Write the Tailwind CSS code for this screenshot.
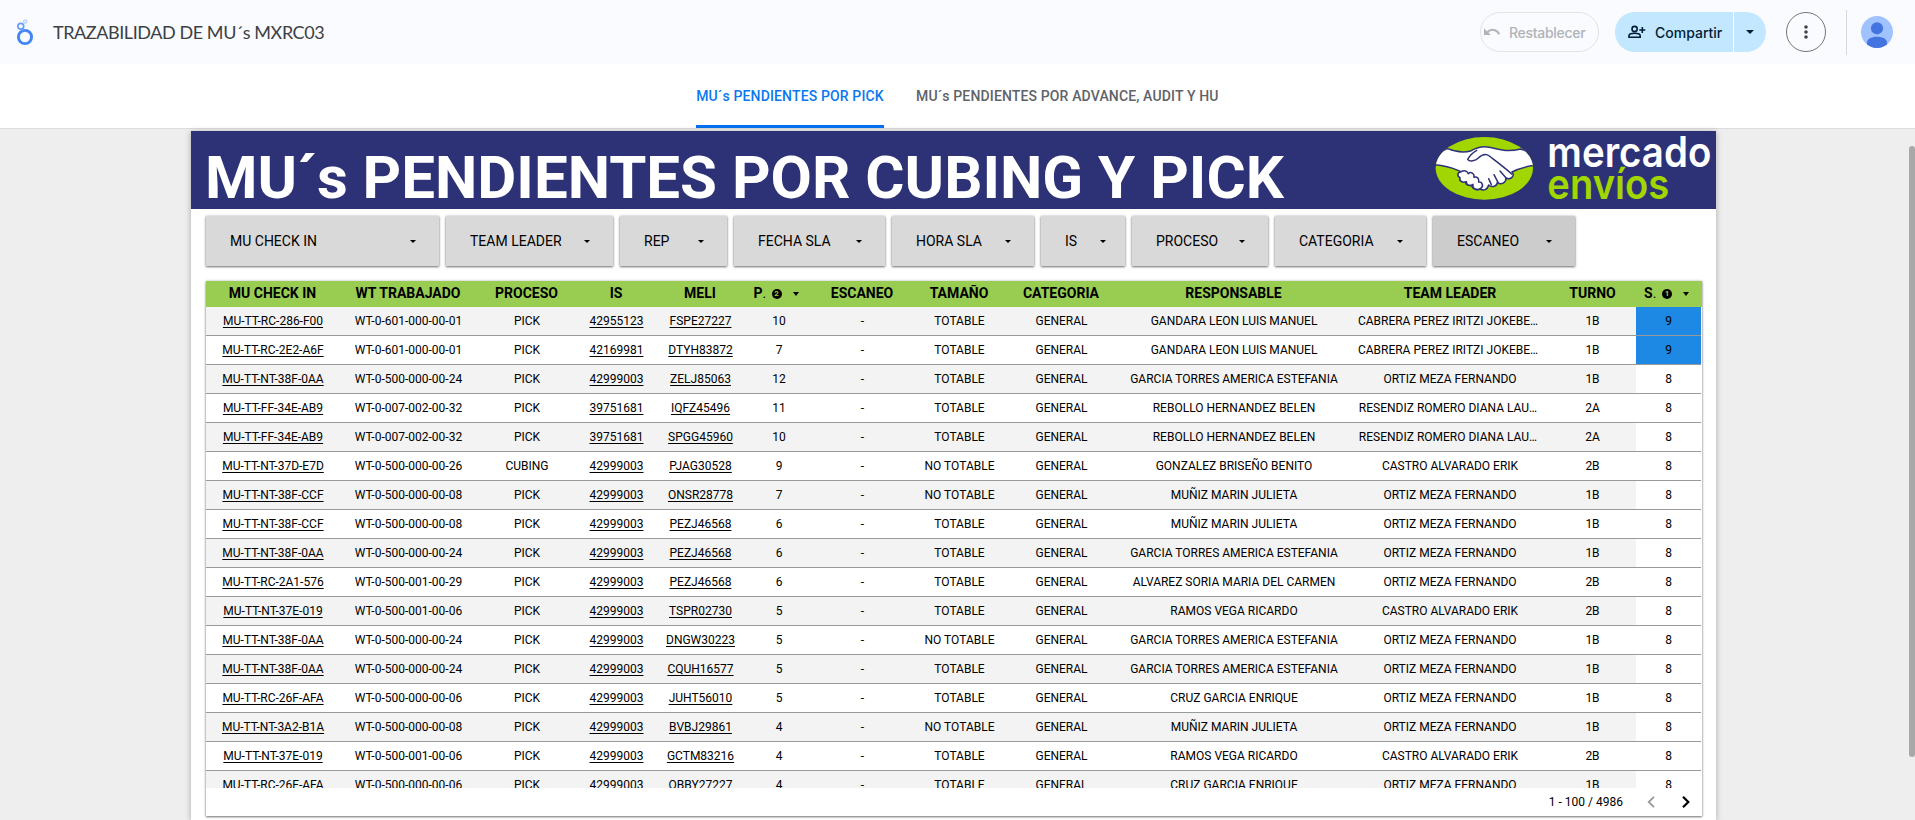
<!DOCTYPE html>
<html lang="es">
<head>
<meta charset="utf-8">
<title>TRAZABILIDAD DE MU´s MXRC03</title>
<script src="https://cdn.jsdelivr.net/npm/@tailwindcss/browser@4"></script>
</head>
<body class="h-[820px] w-[1915px] overflow-hidden bg-[#eeeeee] font-[Roboto,sans-serif] text-black flex flex-col">

<header class="h-16 shrink-0 bg-[#f9fbff] flex items-center font-[Lato,sans-serif]">
  <svg class="ml-4 w-[18px] h-7 shrink-0" viewBox="0 0 18 28" fill="none">
    <circle cx="9" cy="19" r="6.6" stroke="#4285f4" stroke-width="2.9"/>
    <circle cx="4.8" cy="8.2" r="2.9" stroke="#669df6" stroke-width="1.7"/>
    <circle cx="9.2" cy="3.6" r="1.6" stroke="#aecbfa" stroke-width="1.2"/>
    <path d="M5.8 11.2l.9 2" stroke="#669df6" stroke-width="1.5"/>
  </svg>
  <h1 class="ml-[19px] text-[#3c4043] text-lg tracking-[-0.42px] whitespace-nowrap">TRAZABILIDAD DE MU´s MXRC03</h1>
  <div class="ml-auto flex items-center font-[Inter,sans-serif] font-medium text-[14px]">
    <div class="w-[119px] h-10 rounded-full border border-[#e1e3e7] flex items-center text-[#b1b3b6] tracking-[-0.3px]">
      <svg class="ml-[3px] w-4 h-4 shrink-0" viewBox="0 0 16 16"><path fill="none" stroke="#b1b3b6" stroke-width="2" d="M3 8.6C7 4.4 13 5 15.2 10.3"/><path fill="#b1b3b6" d="M0 4.2v6.8h6.800z"/></svg>
      <span class="ml-[9px]">Restablecer</span>
    </div>
    <div class="ml-4 w-[151px] h-10 rounded-full bg-[#c2e7ff] flex items-center text-[#001d35] overflow-hidden">
      <svg class="ml-[13px] w-[18px] h-[14px] shrink-0" viewBox="0 0 18 14" fill="none" stroke="#001d35" stroke-width="1.6"><circle cx="6.600" cy="4" r="2.600"/><path d="M1 12.200v-1.400c0-1.600 3-2.500 5.600-2.500s5.600.9 5.600 2.500v1.400zM14.300 2v6M11.300 5h6"/></svg>
      <span class="ml-[9px]">Compartir</span>
      <span class="ml-auto w-[33px] h-10 border-l border-white flex items-center justify-center"><svg class="w-2 h-1" viewBox="0 0 8 4"><path d="M0 0h8L4 4z" fill="#001d35"/></svg></span>
    </div>
    <div class="ml-5 w-10 h-10 rounded-full border border-[#747775] flex items-center justify-center">
      <svg class="w-1 h-[14px]" viewBox="0 0 4 14" fill="#444746"><circle cx="2" cy="2" r="1.800"/><circle cx="2" cy="7" r="1.800"/><circle cx="2" cy="12" r="1.800"/></svg>
    </div>
    <div class="ml-5 w-px h-[45px] bg-[#d5d8dc]"></div>
    <svg class="ml-[14px] mr-[22px] w-8 h-8" viewBox="0 0 32 32"><defs><clipPath id="av"><circle cx="16" cy="16" r="16"/></clipPath></defs><g clip-path="url(#av)"><path fill="#a0c3ff" d="M0 0h32v32H0z"/><circle cx="16" cy="12.300" r="6.100" fill="#4374e0"/><path fill="#4374e0" d="M6 32v-5c0-4 4-6.200 10-6.200S26 23 26 27v5z"/></g></svg>
  </div>
</header>

<nav class="h-[65px] shrink-0 bg-white border-b border-[#dadce0] flex justify-start pl-[696px] gap-8 text-[14px] tracking-[0.14px] font-medium whitespace-nowrap">
  <a class="w-[188px] text-[#0b78ef] border-b-[3px] border-[#0072f0] flex items-center justify-center pt-[3px]">MU´s PENDIENTES POR PICK</a>
  <a class="text-[#5f6368] flex items-center">MU´s PENDIENTES POR ADVANCE, AUDIT Y HU</a>
</nav>

<div class="flex-1 min-h-0 flex justify-between pt-[2px] pl-[191px]">
  <main class="w-[1525px] bg-white shadow-[0_1px_6px_rgba(0,0,0,.3)]">
    <div class="h-[78px] bg-[#2d3277] flex justify-between overflow-hidden">
      <h2 class="pl-[14px] pt-[12px] h-[78px] text-[60px] leading-[70px] font-bold text-white whitespace-nowrap">MU´s PENDIENTES POR CUBING Y PICK</h2>
      <svg class="w-[316px] h-[78px] shrink-0" viewBox="0 18 948 234">
        <defs><clipPath id="oval"><ellipse cx="253" cy="130" rx="146" ry="94"/></clipPath></defs>
        <ellipse cx="253" cy="130" rx="146" ry="94" fill="#a1d600"/>
        <g clip-path="url(#oval)" stroke="#2d3277" stroke-width="4.500" stroke-linejoin="round" stroke-linecap="round">
          <path fill="#fff" d="M100 90L143 71C165 80 192 84 214 77C230 68 246 64 262 66C290 69 310 84 362 72L410 90V120C380 124 352 132 336 141C346 153 332 166 318 159C318 174 304 181 292 172C292 184 276 189 266 180C262 196 250 197 240 192C232 198 214 191 216 180C205 185 196 178 196 170C184 172 176 166 181 157C170 154 174 141 184 140C174 137 150 122 100 119Z"/>
          <path fill="none" d="M230 76C216 84 208 94 203 103C209 111 226 108 235 99C246 89 258 85 268 93C290 110 322 134 335 147M300 138L319 160M282 149L294 172M266 161L274 179"/>
          <path fill="#fff" d="M184 140C172 141 170 153 180 158C177 170 190 174 199 170C199 181 210 184 219 178C216 192 232 197 242 190C254 181 244 169 236 171C239 161 230 153 222 157C224 145 212 139 205 146C202 138 192 135 184 140Z"/>
        </g>
        <g font-family="Inter, sans-serif" font-weight="600" font-size="126">
          <text x="442" y="126" fill="#fff" textLength="492" lengthAdjust="spacingAndGlyphs">mercado</text>
          <text x="442" y="223" fill="#a1d600" textLength="366" lengthAdjust="spacingAndGlyphs">envíos</text>
        </g>
      </svg>
    </div>

    <div id="filters" class="mt-[7px] ml-[15px] h-[50px] flex gap-[7px] text-[14px]"></div>

    <section class="mt-[15px] ml-[15px] w-[1496px] h-[535px] bg-white shadow-[0_1px_2px_rgba(0,0,0,.5),0_0_3px_rgba(0,0,0,.2)] flex flex-col">
      <div id="head" class="h-[26px] pb-px shrink-0 bg-[#99cd52] grid grid-cols-[133px_138px_99px_80px_88px_69px_98px_96px_108px_237px_196px_89px_64px] items-center text-center text-[14px] font-bold whitespace-nowrap"></div>
      <div id="rows" class="h-[481px] shrink-0 overflow-hidden w-[1495px] text-[12px] whitespace-nowrap"></div>
      <div class="flex-1 flex items-center justify-end text-[12px] pr-[9px]">
        <span class="mr-[22px]">1 - 100 / 4986</span>
        <svg class="w-12 h-3" viewBox="0 0 48 12" fill="none" stroke-width="1.800"><path stroke="#999" d="M9 .8L3.700 6 9 11.200"/><path stroke="#000" stroke-width="2.200" d="M38 .8L43.300 6 38 11.200"/></svg>
      </div>
    </section>
  </main>
  <div class="w-[6px] h-[611px] mt-[15px] rounded-full bg-[#a8a8a8]"></div>
</div>

<script>
const filters = [["MU CHECK IN",233],["TEAM LEADER",167],["REP",107],["FECHA SLA",151],["HORA SLA",142],["IS",84],["PROCESO",136],["CATEGORIA",151],["ESCANEO",142]];
const caret = '<svg class="w-[6px] h-[3px]" viewBox="0 0 6 3"><path d="M0 0h6L3 3z"/></svg>';
document.getElementById('filters').innerHTML = filters.map(([t,w],i) =>
  `<div class="${i===8?'bg-[#cccccc]':'bg-[#d9d9d9]'} shrink-0 flex items-center justify-between pl-6 ${i===5?'pr-[19px]':'pr-[23px]'} shadow-[0_1px_2px_rgba(0,0,0,.5),0_0_3px_rgba(0,0,0,.2)]" style="width:${w}px"><span>${t}</span>${caret}</div>`).join('');

const sortHead = (t,n) => `<div class="flex items-center justify-center gap-[5px] pr-[5px]"><span class="w-[13px] text-left">${t}<span class="font-normal">.</span></span><span class="mt-[1px] w-[10px] h-[10px] rounded-full bg-black text-[#99cd52] text-[8px] leading-[10px]">${n}</span><svg class="ml-[6px] w-[6px] h-1" viewBox="0 0 6 4"><path d="M0 0h6L3 4z"/></svg></div>`;
document.getElementById('head').innerHTML = ["MU CHECK IN","WT TRABAJADO","PROCESO","IS","MELI",["P",2],"ESCANEO","TAMAÑO","CATEGORIA","RESPONSABLE","TEAM LEADER","TURNO",["S",1]]
  .map(h => Array.isArray(h) ? sortHead(h[0],h[1]) : `<div>${h}</div>`).join('');

const O="ORTIZ MEZA FERNANDO", C="CASTRO ALVARADO ERIK", G="GARCIA TORRES AMERICA ESTEFANIA", M="MUÑIZ MARIN JULIETA", T="TOTABLE", N="NO TOTABLE";
const K="CABRERA PEREZ IRITZI JOKEBE…", R="RESENDIZ ROMERO DIANA LAU…", I="42999003";
const data = [
["RC-286-F00","601-000-00-01","PICK","42955123","FSPE27227",10,T,"GANDARA LEON LUIS MANUEL",K,"1B",9],
["RC-2E2-A6F","601-000-00-01","PICK","42169981","DTYH83872",7,T,"GANDARA LEON LUIS MANUEL",K,"1B",9],
["NT-38F-0AA","500-000-00-24","PICK",I,"ZELJ85063",12,T,G,O,"1B",8],
["FF-34E-AB9","007-002-00-32","PICK","39751681","IQFZ45496",11,T,"REBOLLO HERNANDEZ BELEN",R,"2A",8],
["FF-34E-AB9","007-002-00-32","PICK","39751681","SPGG45960",10,T,"REBOLLO HERNANDEZ BELEN",R,"2A",8],
["NT-37D-E7D","500-000-00-26","CUBING",I,"PJAG30528",9,N,"GONZALEZ BRISEÑO BENITO",C,"2B",8],
["NT-38F-CCF","500-000-00-08","PICK",I,"ONSR28778",7,N,M,O,"1B",8],
["NT-38F-CCF","500-000-00-08","PICK",I,"PEZJ46568",6,T,M,O,"1B",8],
["NT-38F-0AA","500-000-00-24","PICK",I,"PEZJ46568",6,T,G,O,"1B",8],
["RC-2A1-576","500-001-00-29","PICK",I,"PEZJ46568",6,T,"ALVAREZ SORIA MARIA DEL CARMEN",O,"2B",8],
["NT-37E-019","500-001-00-06","PICK",I,"TSPR02730",5,T,"RAMOS VEGA RICARDO",C,"2B",8],
["NT-38F-0AA","500-000-00-24","PICK",I,"DNGW30223",5,N,G,O,"1B",8],
["NT-38F-0AA","500-000-00-24","PICK",I,"CQUH16577",5,T,G,O,"1B",8],
["RC-26F-AFA","500-000-00-06","PICK",I,"JUHT56010",5,T,"CRUZ GARCIA ENRIQUE",O,"1B",8],
["NT-3A2-B1A","500-000-00-08","PICK",I,"BVBJ29861",4,N,M,O,"1B",8],
["NT-37E-019","500-001-00-06","PICK",I,"GCTM83216",4,T,"RAMOS VEGA RICARDO",C,"2B",8],
["RC-26F-AFA","500-000-00-06","PICK",I,"OBBY27227",4,T,"CRUZ GARCIA ENRIQUE",O,"1B",8]];
const link = t => `<div class="underline underline-offset-2">${t}</div>`, cell = t => `<div>${t}</div>`;
document.getElementById('rows').innerHTML = data.map((r,i) =>
  `<div class="${i%2?'bg-white':'bg-[#f3f3f3]'} h-[29px] border-b border-[#999999] grid grid-cols-[134px_137px_100px_79px_89px_68px_99px_95px_109px_236px_196px_88px_65px] text-center leading-[28px]">`
  + link('MU-TT-'+r[0]) + cell('WT-0-'+r[1]) + cell(r[2]) + link(r[3]) + link(r[4]) + cell(r[5]) + cell('-') + cell(r[6]) + cell('GENERAL') + cell(r[7])
  + (r[8].endsWith('…') ? `<div class="pr-1">${r[8]}</div>` : cell(r[8])) + `<div class="pl-px">${r[9]}</div>`
  + `<div class="${r[10]===9?'bg-[#1e88e5]':'bg-white'}">${r[10]}</div></div>`).join('');
</script>
</body>
</html>
